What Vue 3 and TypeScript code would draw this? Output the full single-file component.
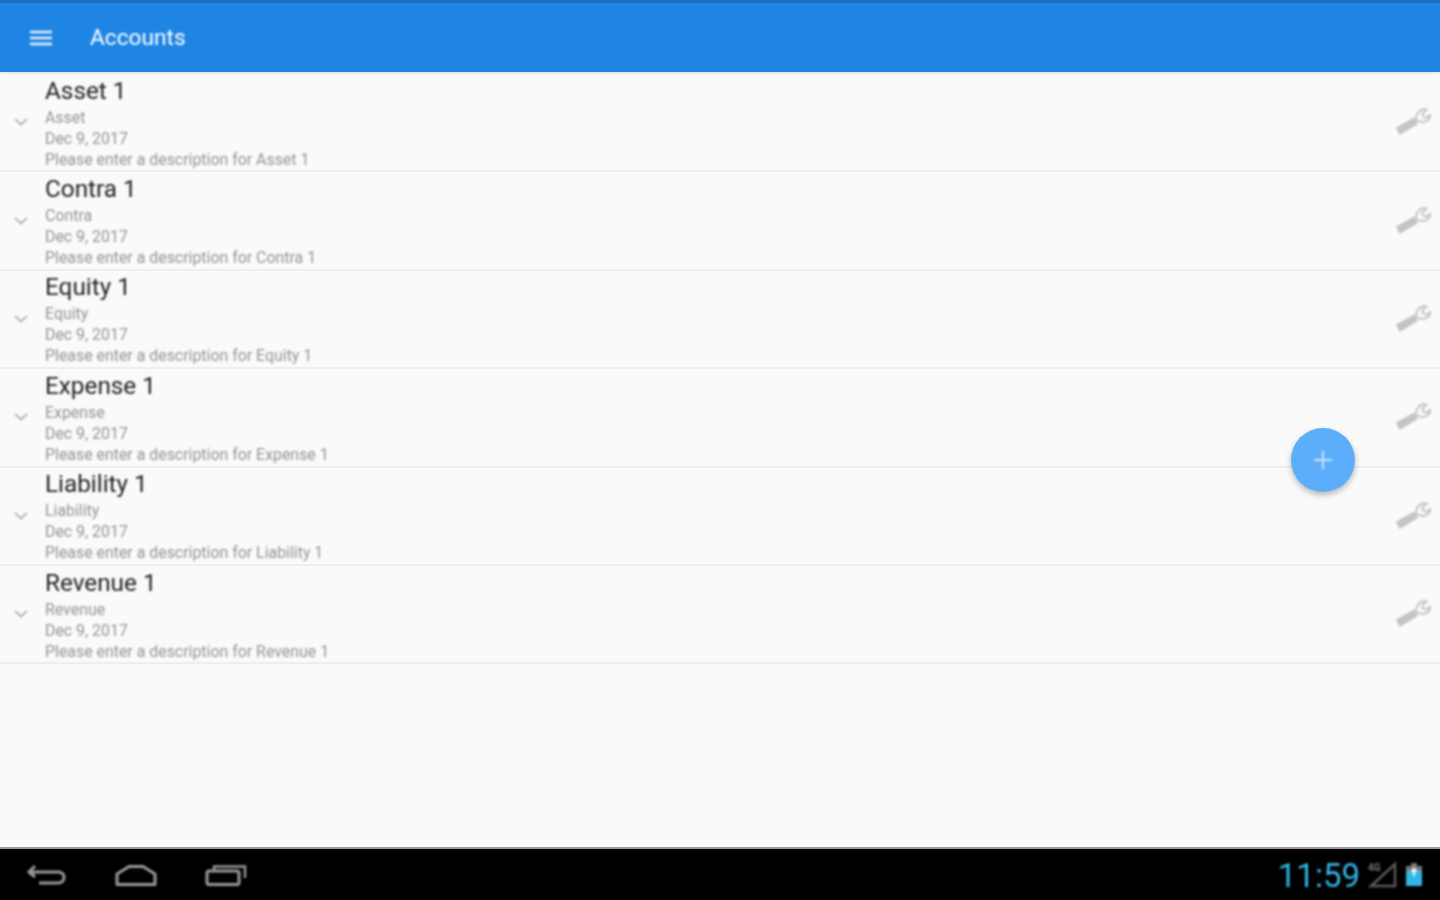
<template>
  <div class="screen">
    <header class="appbar">
      <svg class="menu soft" width="22" height="18" viewBox="0 0 22 18">
        <path d="M0 3h22M0 9h22M0 15h22" stroke="#e6f1fc" stroke-width="2.4" fill="none" />
      </svg>
      <span class="appbar-title soft">Accounts</span>
    </header>

    <main class="list">
      <div v-for="acc in accounts" :key="acc.name" class="row">
        <svg class="chevron soft" width="14" height="8" viewBox="0 0 14 8">
          <path d="M1 1l6 5.6L13 1" stroke="#9a9a9a" stroke-width="1.3" fill="none" />
        </svg>
        <div class="info soft">
          <div class="name">{{ acc.name }} 1</div>
          <div class="meta">{{ acc.name }}</div>
          <div class="meta">Dec 9, 2017</div>
          <div class="meta">Please enter a description for {{ acc.name }} 1</div>
        </div>
        <svg class="wrench soft" width="36" height="28" viewBox="0 0 36 28">
          <path d="M1 20.500L19 10.500l4 6.500L4.500 28z" fill="#c4c4c4" />
          <path d="M21.500 13.500c-1.500-5 1.500-10 7-11.500l3 .8-3 2.600c-1.600 1.200-1.400 3.600.4 4.600 1.500.8 3 .6 4.300-.4l1.800-1.400c.5 3.500-3 6.600-7.300 6.900z" fill="none" stroke="#c4c4c4" stroke-width="2" />
        </svg>
      </div>
    </main>

    <button class="fab" type="button">
      <svg class="soft" width="20" height="20" viewBox="0 0 20 20">
        <path d="M10 1v18M1 10h18" stroke="#c9e4ff" stroke-width="2" fill="none" />
      </svg>
    </button>

    <footer class="navbar">
      <div class="nav-buttons soft">
        <svg width="40" height="26" viewBox="0 0 40 26">
          <path d="M8 4L2 10l6 5M3 10h28c4 0 6 2.500 6 5.500S35 21 31 21H12" stroke="#999" stroke-width="3" fill="none" />
        </svg>
        <svg width="42" height="24" viewBox="0 0 42 24">
          <path d="M2 11L14 3.500h14L40 11v10.500H2z" stroke="#999" stroke-width="3" fill="none" stroke-linejoin="round" />
        </svg>
        <svg width="42" height="24" viewBox="0 0 42 24">
          <path d="M9 7V3.500h31V15" stroke="#999" stroke-width="2.400" fill="none" />
          <rect x="2" y="8" width="32" height="13.500" rx="2" stroke="#999" stroke-width="3" fill="none" />
        </svg>
      </div>
      <div class="status soft">
        <span class="clock">11:59</span>
        <svg width="30" height="26" viewBox="0 0 30 26">
          <text x="0" y="9" class="net">4G</text>
          <path d="M3 24L27 2v22z" stroke="#5a5a5a" stroke-width="2.400" fill="none" />
        </svg>
        <svg width="16" height="24" viewBox="0 0 16 24">
          <rect x="5" y="0" width="6" height="3" fill="#777" />
          <rect x="0" y="3" width="16" height="5" fill="#777" />
          <rect x="0" y="8" width="16" height="15" fill="#33b5e5" />
          <path d="M8 4l-4 5h3v4h2V9h3z" fill="#e8f7fd" />
        </svg>
      </div>
    </footer>
  </div>
</template>

<script setup lang="ts">
interface Account {
  name: string;
}

const accounts: Account[] = [
  { name: "Asset" },
  { name: "Contra" },
  { name: "Equity" },
  { name: "Expense" },
  { name: "Liability" },
  { name: "Revenue" },
];
</script>

<style>
html,
body {
  margin: 0;
  background: #fafafa;
}
</style>

<style scoped>
.screen {
  position: relative;
  width: 1440px;
  height: 900px;
  display: flex;
  flex-direction: column;
  background: #fafafa;
  overflow: hidden;
  font-family: Roboto, "Liberation Sans", sans-serif;
}

/* the reference is an upscaled capture, everything in it is a bit soft */
.soft {
  filter: blur(0.8px);
}

.appbar {
  height: 72px;
  flex: none;
  box-sizing: border-box;
  display: flex;
  align-items: center;
  padding: 1px 0 0 30px;
  gap: 38px;
  background: #1e85e5;
  border-top: 3px solid #1a6fbe;
  box-shadow: 0 1px 2px rgba(0, 0, 0, 0.12);
}

.appbar-title {
  color: #fff;
  font-size: 22.7px;
  line-height: 28px;
}

.list {
  flex: 1;
  padding-top: 2px;
}

.row {
  height: 98.4px;
  box-sizing: border-box;
  display: flex;
  align-items: center;
  border-bottom: 2px solid #eeeeee;
  padding: 0 7px 0 14px;
}

.chevron {
  flex: none;
  margin-right: 17px;
}

.info {
  flex: 1;
}

.name {
  font-size: 24.3px;
  line-height: 32px;
  color: #222;
}

.meta {
  font-size: 15.9px;
  line-height: 21px;
  color: #949494;
}

.wrench {
  flex: none;
  margin: -2px 2px 0 0;
}

.fab {
  position: absolute;
  left: 1291px;
  top: 428px;
  width: 64px;
  height: 64px;
  border: none;
  border-radius: 50%;
  padding: 0;
  display: flex;
  align-items: center;
  justify-content: center;
  background: #5caefa;
  box-shadow: 0 3px 6px rgba(0, 0, 0, 0.28);
}

.navbar {
  height: 53px;
  flex: none;
  box-sizing: border-box;
  display: flex;
  align-items: center;
  justify-content: space-between;
  padding: 0 18px 0 27px;
  background: #000;
  border-top: 2px solid #9a9a9a;
}

.nav-buttons {
  display: flex;
  align-items: center;
  gap: 48px;
}

.status {
  display: flex;
  align-items: center;
  gap: 8px;
}

.clock {
  color: #33b5e5;
  font-size: 33px;
  line-height: 40px;
  font-weight: 400;
  margin-top: 2px;
}

.net {
  font-size: 10px;
  font-weight: 700;
  fill: #777;
}
</style>
